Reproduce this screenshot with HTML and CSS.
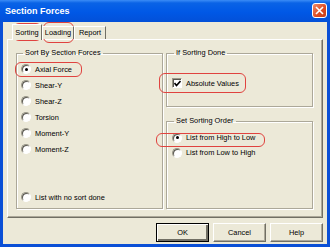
FILE: index.html
```html
<!DOCTYPE html>
<html lang="en">
<head>
    <meta charset="UTF-8">
    <title>Section Forces</title>
    <link rel="stylesheet" href="styles.css">
</head>
<body>
    <div class="window">
        <div class="titlebar">
            <span class="title">Section Forces</span>
            <span class="close">
                <svg width="9" height="9" viewBox="0 0 9 9"><path d="M1 1 L8 8 M8 1 L1 8" stroke="#fff" stroke-width="1.6"/></svg>
            </span>
        </div>
        <div class="client">
            <div class="tabs">
                <div class="tab active">Sorting</div>
                <div class="tab">Loading</div>
                <div class="tab">Report</div>
            </div>
            <div class="panel">
                <fieldset class="group group-left">
                    <legend>Sort By Section Forces</legend>
                    <div class="option"><span class="radio checked"></span>Axial Force</div>
                    <div class="option"><span class="radio"></span>Shear-Y</div>
                    <div class="option"><span class="radio"></span>Shear-Z</div>
                    <div class="option"><span class="radio"></span>Torsion</div>
                    <div class="option"><span class="radio"></span>Moment-Y</div>
                    <div class="option"><span class="radio"></span>Moment-Z</div>
                    <div class="option last"><span class="radio"></span>List with no sort done</div>
                </fieldset>
                <div class="right-col">
                    <fieldset class="group group-done">
                        <legend>If Sorting Done</legend>
                        <div class="option">
                            <span class="check">
                                <svg width="7" height="7" viewBox="0 0 7 7"><path d="M0.5 3 L2.5 5.5 L6.5 1" stroke="#000" stroke-width="1.6" fill="none"/></svg>
                            </span>Absolute Values
                        </div>
                    </fieldset>
                    <fieldset class="group group-order">
                        <legend>Set Sorting Order</legend>
                        <div class="option small"><span class="radio checked"></span>List from High to Low</div>
                        <div class="option small"><span class="radio"></span>List from Low to High</div>
                    </fieldset>
                </div>
            </div>
            <div class="buttons">
                <button class="btn default">OK</button>
                <button class="btn">Cancel</button>
                <button class="btn">Help</button>
            </div>
        </div>

        <!-- red markup drawn over the dialog -->
        <div class="mark" style="left:13px;top:23px;width:29px;height:18px"></div>
        <div class="mark" style="left:43px;top:22px;width:31px;height:21px"></div>
        <div class="mark" style="left:15px;top:62px;width:67px;height:15px"></div>
        <div class="mark" style="left:159px;top:73px;width:87px;height:20px"></div>
        <div class="mark" style="left:156px;top:133px;width:109px;height:14px"></div>
    </div>
</body>
</html>
```

FILE: styles.css
```css
body {
    margin: 0;
    font-family: "Liberation Sans", Arial, sans-serif;
    font-size: 7.4px;
    color: #000;
    background: #fff;
}

.window {
    position: relative;
    width: 330px;
    height: 247px;
    display: flex;
    flex-direction: column;
    background: #0a4fd6;
    box-sizing: border-box;
}

.titlebar {
    height: 22px;
    display: flex;
    align-items: center;
    justify-content: space-between;
    padding: 0 3px 0 5px;
    background: linear-gradient(#3b8cf6 0, #0a63e6 3px, #0058e6 55%, #0350d8 100%);
}

.title {
    color: #fff;
    font-size: 9px;
    font-weight: bold;
}

.close {
    width: 13px;
    height: 13px;
    margin-top: -1px;
    border: 1px solid #fff;
    border-radius: 3px;
    background: linear-gradient(135deg, #f08a68, #dc4a22 60%, #c4401c);
    display: flex;
    align-items: center;
    justify-content: center;
}

.client {
    flex: 1;
    margin: 0 3px 3px;
    padding: 2px 4px 0;
    background: #ece9d8;
    display: flex;
    flex-direction: column;
}

.tabs {
    display: flex;
    align-items: flex-end;
    margin-left: 5px;
    height: 16px;
    margin-bottom: -1px;
    position: relative;
    z-index: 1;
}

.tab {
    height: 13px;
    line-height: 12px;
    padding: 0 5px;
    border: 1px solid #fff;
    border-right-color: #716f64;
    border-bottom: none;
    box-sizing: border-box;
    margin-bottom: 1px;
    background: #ece9d8;
    text-align: center;
}

.tab.active {
    width: 30px;
    height: 16px;
    line-height: 15px;
    margin-bottom: 0;
    padding: 0;
}

.tab:nth-child(2) {
    width: 32px;
    padding: 0;
}

.tab:nth-child(3) {
    width: 32px;
    padding: 0;
}

.panel {
    height: 179px;
    box-sizing: border-box;
    border: 1px solid #fff;
    border-right-color: #716f64;
    border-bottom-color: #716f64;
    box-shadow: inset -1px -1px 0 #aca899;
    padding: 8px 9px 8px 8px;
    display: grid;
    grid-template-columns: 147px 147px;
    gap: 3px;
}

.group {
    margin: 0;
    padding: 0 4px;
    min-width: 0;
    border: 1px solid #aca899;
    box-shadow: inset 1px 1px 0 #fff, 1px 1px 0 #fff;
    display: flex;
    flex-direction: column;
    box-sizing: border-box;
}

.group legend {
    padding: 0 2px;
    margin-left: 2px;
    line-height: 10px;
}

.group-left {
    height: 161px;
    padding-top: 3px;
    padding-bottom: 3px;
}

.right-col {
    display: flex;
    flex-direction: column;
    gap: 9px;
}

.group-done {
    height: 59px;
    padding: 17px 5px 0;
}

.group-order {
    height: 93px;
    padding: 4px 5px 0;
}

.option {
    height: 16px;
    display: flex;
    align-items: center;
    gap: 4px;
    white-space: nowrap;
}

.option.small {
    height: 15px;
}

.option.last {
    margin-top: auto;
}

.radio {
    width: 10px;
    height: 10px;
    box-sizing: border-box;
    border-radius: 50%;
    border: 1px solid;
    border-color: #9a9888 #fff #fff #9a9888;
    box-shadow: inset 1px 1px 0 #5a5850;
    background: #fff;
    display: flex;
    align-items: center;
    justify-content: center;
    flex-shrink: 0;
}

.radio.checked::after {
    content: "";
    width: 3px;
    height: 3px;
    border-radius: 50%;
    background: #000;
}

.check {
    width: 10px;
    height: 10px;
    box-sizing: border-box;
    border: 1px solid;
    border-color: #9a9888 #fff #fff #9a9888;
    box-shadow: inset 1px 1px 0 #5a5850;
    background: #fff;
    display: flex;
    align-items: center;
    justify-content: center;
    flex-shrink: 0;
}

.buttons {
    display: flex;
    justify-content: flex-end;
    gap: 4px;
    margin-top: 5px;
}

.btn {
    width: 53px;
    height: 19px;
    padding: 0;
    font-family: "Liberation Sans", Arial, sans-serif;
    font-size: 7.4px;
    color: #000;
    background: #ece9d8;
    border: 1px solid;
    border-color: #fff #716f64 #716f64 #fff;
    box-shadow: inset -1px -1px 0 #aca899;
}

.btn.default {
    border-color: #000;
    box-shadow: inset 1px 1px 0 #fff, inset -2px -2px 0 #716f64;
}

.mark {
    position: absolute;
    border: 1.3px solid #e0433f;
    border-radius: 6px;
    box-sizing: border-box;
}
```
